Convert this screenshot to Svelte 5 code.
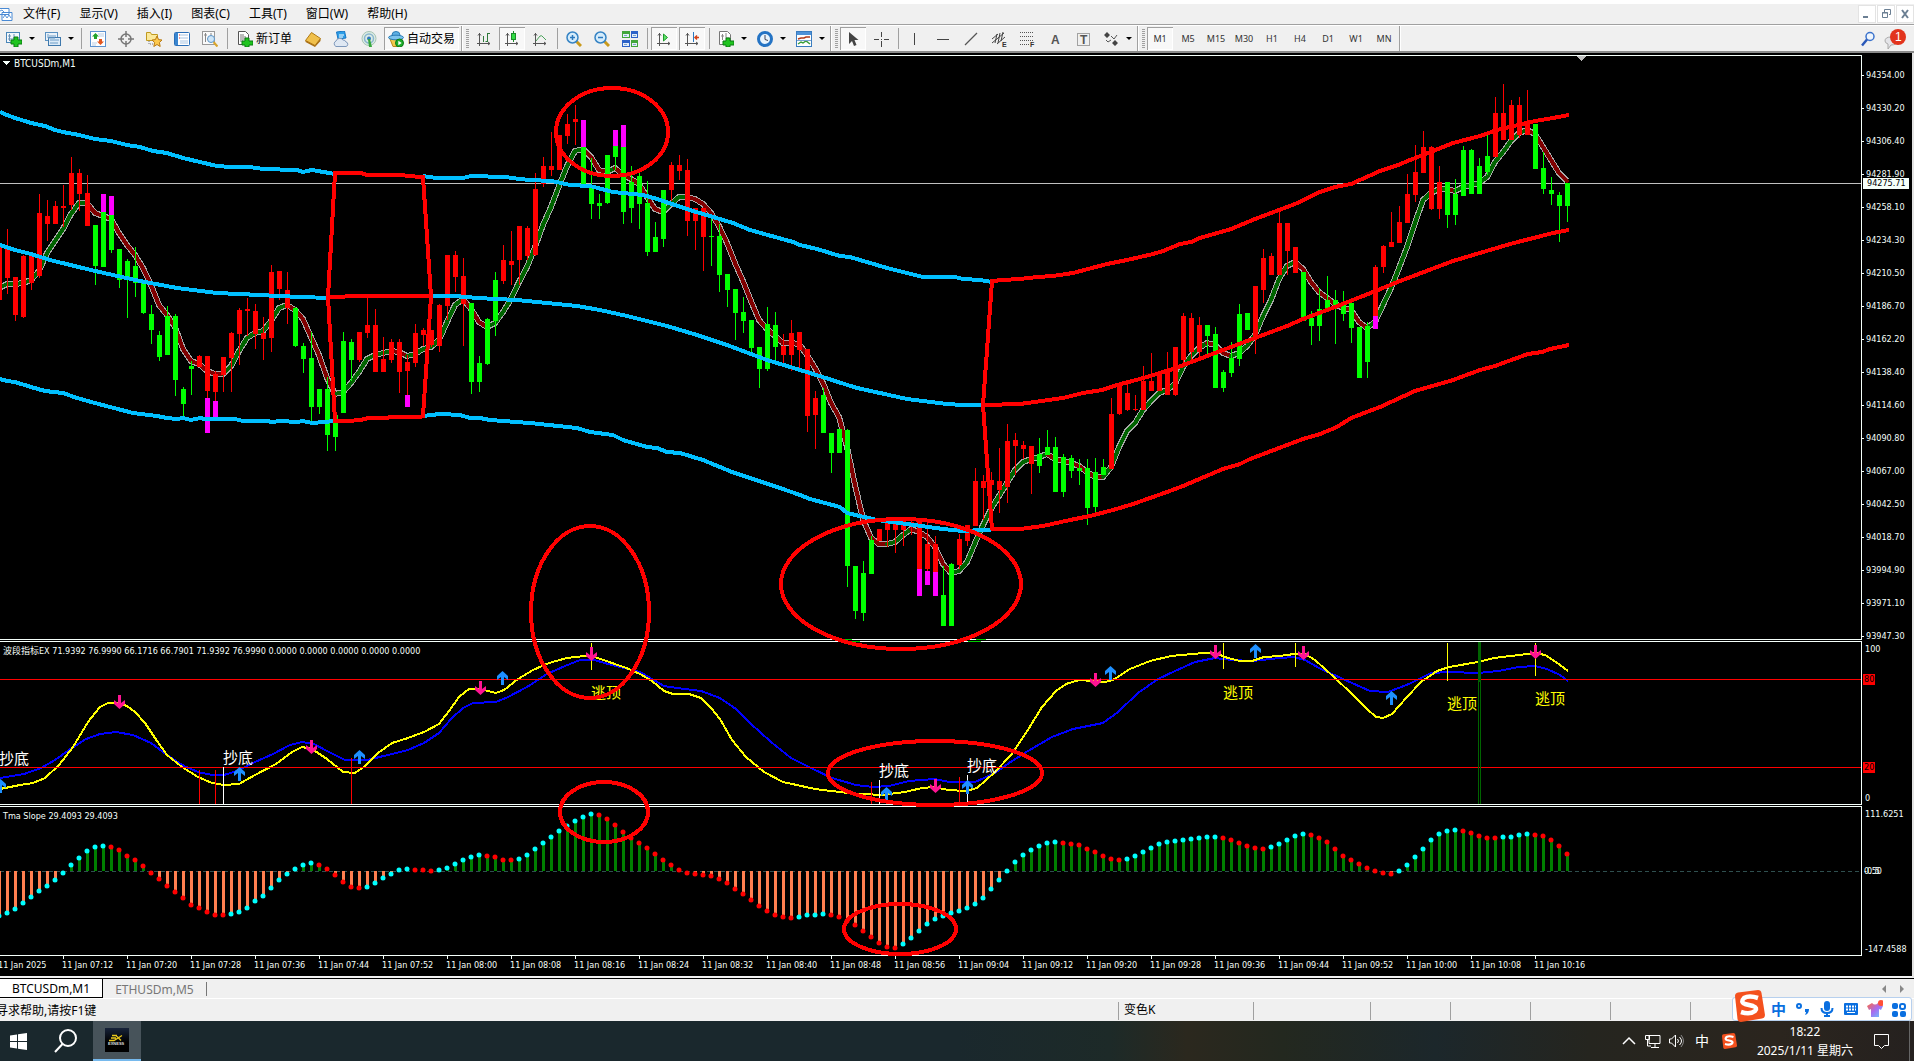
<script>
	const STEP = 8;

	const menus = ['文件(F)', '显示(V)', '插入(I)', '图表(C)', '工具(T)', '窗口(W)', '帮助(H)'];
	const periods = ['M1', 'M5', 'M15', 'M30', 'H1', 'H4', 'D1', 'W1', 'MN'];

	const prices = [
		'94354.00', '94330.20', '94306.40', '94281.90', '94258.10', '94234.30',
		'94210.50', '94186.70', '94162.20', '94138.40', '94114.60', '94090.80',
		'94067.00', '94042.50', '94018.70', '93994.90', '93971.10', '93947.30'
	];

	// one label every 8 minutes, 07:12 to 10:16
	const times = Array.from({ length: 24 }, (_, i) => {
		const m = 7 * 60 + 12 + i * 8;
		return `11 Jan ${String(Math.floor(m / 60)).padStart(2, '0')}:${String(m % 60).padStart(2, '0')}`;
	});

	// colour, body top, body bottom, wick top, wick bottom, signal top, signal bottom
	const candles = `
r,247,300,247,300 r,249,278,229,294 r,277,315,277,321 r,256,317,255,318 r,255,283,253,290
r,213,276,194,278 r,216,224,200,241 r,206,224,201,224 r,206,208,185,227 r,173,205,157,210
r,173,194,169,211 r,193,226,175,226 g,225,266,225,285 g,212,267,212,267,194,212 g,215,250,215,253,196,215
g,249,280,249,288 g,261,280,259,318 g,266,283,247,297 g,283,313,280,314 g,314,330,305,344
g,335,357,331,361 g,316,355,306,355 g,316,380,314,396 g,389,404,387,416 g,366,369,361,395
r,356,367,355,367 r,356,391,356,398,398,433 r,374,392,371,401,401,419 r,357,375,357,392 r,333,358,332,392
r,310,334,308,365 r,309,311,298,336 r,311,334,304,349 r,333,339,317,360 r,272,338,265,352
r,271,289,271,300 r,290,308,272,324 g,308,346,307,347 g,346,359,343,373 g,358,407,332,422
g,389,407,389,414 g,389,435,377,451 g,415,437,415,451 g,341,413,332,413 g,342,360,339,381
r,332,360,332,362 r,325,333,297,338 r,325,372,309,372 r,359,372,337,372 r,342,360,339,363
r,342,372,339,393 r,362,371,355,395,395,407 r,333,363,324,367 r,330,335,328,346 r,330,345,330,347
r,305,346,304,352 r,255,306,255,320 r,255,277,251,292 r,276,304,258,346 g,303,382,303,394
g,363,382,356,392 g,319,364,318,365 g,280,321,272,336 r,260,281,245,284 r,261,265,231,285
r,226,260,226,285 r,228,256,226,260 r,189,255,173,256 r,166,184,157,187 r,166,170,132,176
r,135,170,135,170 r,124,136,114,144 r,119,122,105,145 g,147,184,147,184,120,147 g,187,204,158,219
g,203,206,194,219 g,155,203,155,204 g,146,157,146,170,130,146 g,147,212,147,224,125,147 g,182,208,166,223
g,176,204,173,229 g,203,252,181,256 g,237,252,222,252 g,190,239,190,247 r,165,190,162,201
r,165,171,155,180 r,170,221,159,236 r,208,221,208,250 r,208,237,208,271 g,236,237,214,266
g,236,275,224,292 g,274,290,274,307 g,289,313,289,340 g,312,321,297,333 g,320,348,320,352
g,347,369,347,388 g,324,369,307,371 g,325,347,312,360 r,346,355,334,363 r,333,355,320,371
r,332,350,332,369 r,349,416,349,432 r,398,415,391,449 g,395,433,388,433 g,433,453,433,473
g,429,453,429,453 g,430,566,429,587 g,566,611,566,619 g,573,613,561,621 g,540,574,536,574
r,529,541,529,541 r,519,530,517,547 r,522,530,520,553 r,521,530,519,546 r,522,524,520,535
r,522,569,522,569,569,596 r,544,569,522,571,571,585 r,544,572,536,572,572,596 g,595,626,566,626 g,564,626,563,626
r,539,565,534,569 r,525,541,525,546 r,481,526,468,526 r,481,488,475,520 r,480,485,472,510
r,481,490,448,513 r,441,487,424,503 r,440,446,433,475 r,445,449,441,459 r,446,464,446,494
g,454,466,438,473 g,447,455,430,455 g,447,492,437,492 g,457,492,454,497 g,458,471,455,478
g,468,471,459,485 g,468,508,459,525 g,472,507,458,513 g,467,475,459,475 r,414,469,398,469
r,384,414,384,415 r,393,410,384,411 r,409,410,395,411 r,381,410,366,410 r,381,391,353,391
r,372,391,372,391 r,370,395,352,395 r,347,395,347,396 r,316,360,313,365 r,318,352,313,361
r,325,352,317,358 g,325,336,325,355 g,334,388,327,388 g,372,388,370,392 g,358,373,342,377
g,314,359,304,366 g,313,330,313,330 r,286,339,286,354 r,258,290,249,303 r,256,275,253,275
r,223,275,209,275 r,223,251,223,275 r,247,273,247,273 g,272,321,272,321 g,318,326,311,345
g,309,326,288,341 g,300,310,276,310 g,300,307,290,344 g,304,314,291,321 g,303,328,300,343
g,327,378,327,378 g,326,362,322,378 r,267,316,265,316,316,329 r,246,267,245,273 r,242,247,212,247
r,222,243,206,243 r,194,223,174,223 r,172,195,145,202 r,147,173,131,173 r,147,209,146,210
r,182,209,166,219 g,182,215,182,228 g,194,215,179,225 g,150,196,146,196 g,150,194,149,194
g,166,194,158,194 g,156,172,134,175 r,113,157,97,157 r,113,140,84,140 r,105,140,100,140
r,105,135,97,138 r,122,135,90,135 g,124,169,124,169 g,168,189,152,194 g,190,194,177,205
g,195,206,192,242 g,183,206,183,222`
		.trim()
		.split(/\s+/)
		.map((row, i) => {
			const [side, top, bottom, high, low, sigTop, sigBottom] = row.split(',');
			return { x: i * STEP - 1, side, top: +top, bottom: +bottom, high: +high, low: +low, sigTop: +sigTop, sigBottom: +sigBottom };
		});

	const average = [
		288, 284, 284, 283, 280, 271, 253, 241, 229, 214, 203, 203, 213, 216, 219, 233, 245, 255, 268, 285,
		305, 315, 327, 349, 361, 364, 371, 374, 374, 366, 351, 338, 333, 331, 321, 308, 305, 310, 319, 337,
		355, 378, 394, 392, 383, 372, 359, 355, 353, 351, 352, 356, 354, 349, 347, 340, 322, 305, 299, 309,
		322, 327, 323, 312, 299, 282, 267, 247, 225, 207, 186, 166, 151, 149, 157, 170, 172, 168, 175, 179,
		184, 197, 209, 212, 204, 197, 197, 199, 204, 213, 226, 243, 263, 281, 301, 320, 329, 336, 343, 343,
		344, 355, 368, 383, 403, 417, 447, 485, 519, 538, 544, 544, 542, 535, 529, 532, 537, 547, 564, 573,
		571, 562, 543, 525, 509, 496, 483, 470, 462, 459, 457, 454, 459, 461, 463, 466, 472, 477, 477, 467,
		447, 431, 423, 410, 401, 393, 390, 384, 367, 356, 348, 343, 345, 353, 356, 353, 346, 335, 316, 300,
		279, 266, 262, 269, 282, 292, 298, 304, 308, 310, 322, 328, 322, 305, 288, 268, 247, 223, 200, 193,
		189, 189, 191, 187, 185, 183, 177, 162, 152, 141, 133, 130, 134, 147, 160, 173, 181
	];

	const slope = [
		916, 913, 909, 903, 897, 891, 886, 880, 873, 865, 858, 851, 847, 846, 847, 850, 856, 860, 866, 873,
		879, 886, 892, 898, 905, 908, 912, 915, 915, 914, 912, 908, 901, 896, 888, 880, 874, 869, 865, 863,
		865, 869, 875, 882, 887, 888, 887, 883, 878, 874, 870, 869, 870, 870, 871, 870, 868, 864, 860, 857,
		855, 856, 857, 860, 860, 859, 855, 849, 843, 837, 831, 826, 821, 817, 814, 815, 819, 825, 832, 838,
		843, 848, 854, 860, 865, 870, 873, 874, 875, 876, 879, 883, 889, 894, 900, 906, 911, 915, 917, 918,
		917, 915, 915, 914, 915, 917, 921, 925, 931, 937, 943, 947, 948, 944, 938, 931, 924, 919, 916, 913,
		911, 908, 904, 898, 889, 880, 871, 862, 855, 850, 846, 843, 842, 843, 844, 845, 849, 852, 856, 859,
		860, 859, 856, 852, 848, 844, 842, 841, 840, 839, 838, 837, 837, 838, 840, 843, 846, 848, 849, 847,
		844, 840, 836, 834, 835, 838, 842, 849, 856, 860, 864, 868, 871, 873, 874, 871, 865, 857, 849, 840,
		834, 831, 830, 831, 833, 836, 838, 838, 837, 837, 835, 834, 835, 836, 840, 846, 854
	];

	// a falling value keeps its colour over flat steps
	function trend(values) {
		let falling = false;
		return values.map((y, i) => {
			if (i && y !== values[i - 1]) falling = y > values[i - 1];
			return { x: i * STEP - 1, y, falling };
		});
	}

	const ma = trend(average);
	const maLine = ma.map((p) => `${p.x},${p.y}`).join(' ');
	const dots = trend(slope);

	const bandsBlue = [
		'0,112 7,115 15,118 31,123 45,126 55,130 63,132 79,135 95,139 111,141 127,145 140,147 153,151 167,153 183,158 200,162 217,166 230,167 250,167 263,169 297,170 303,172 312,170 335,174',
		'423,176 436,178 463,178 471,176 505,177 520,179 530,180 552,181 570,185 590,186 613,192 643,195 657,199 693,211 733,223 750,230 793,242 800,245 817,249 840,256 850,257 887,268 923,277 955,277 963,279 980,280 992,282',
		'0,245 15,250 31,254 50,260 95,271 140,281 177,288 217,293 260,295 277,296 328,298',
		'431,296 455,296 477,298 517,300 547,303 577,306 600,310 627,316 667,326 697,335 727,345 767,360 810,373 857,388 880,393 907,399 947,404 963,405 984,405',
		'0,379 7,381 15,382 31,387 45,391 63,393 77,398 95,403 110,407 133,413 157,416 167,418 177,419 183,418 191,420 200,418 205,419 235,419 243,421 267,421 272,422 280,421 297,422 303,421 312,423 335,421',
		'424,416 430,415 441,414 460,415 470,418 480,418 490,420 530,423 577,428 590,432 613,435 623,440 647,447 657,448 667,452 680,453 703,460 732,472 765,483 780,488 800,495 810,499 840,507 847,513 877,520 907,524 943,529 963,531 983,530 991,530'
	];
	const bandsRed = [
		'328,297 335,173 361,173 367,175 403,175 407,176 423,177 431,296 363,296 328,297 335,421 347,421 361,420 368,418 385,418 392,417 420,417 423,416 431,297',
		'992,530 983,405 992,281 1003,280 1020,279 1037,277 1053,276 1073,273 1107,264 1127,260 1153,254 1163,251 1180,244 1191,242 1200,238 1231,229 1255,219 1295,204 1320,192 1335,187 1351,184 1380,171 1398,165 1410,160 1423,155 1453,143 1480,136 1497,130 1535,121 1553,118 1569,115',
		'985,405 1020,404 1063,398 1083,393 1102,390 1117,385 1140,379 1173,369 1215,353 1255,338 1287,326 1303,319 1335,307 1373,292 1400,281 1453,261 1510,244 1553,233 1569,230',
		'991,529 1020,529 1043,526 1070,520 1090,516 1113,510 1133,504 1167,492 1183,486 1197,480 1223,469 1240,464 1250,459 1303,439 1320,434 1337,427 1351,418 1380,407 1415,391 1453,380 1480,370 1495,366 1503,363 1528,354 1542,352 1550,349 1569,345'
	];

	const fast =
		'0,789 20,785 33,783 45,778 59,765 73,747 88,722 100,707 108,703 118,703 127,706 135,712 145,723 157,741 167,755 182,767 198,777 212,783 224,785 239,784 255,775 276,764 292,752 302,747 312,749 327,759 343,772 355,773 365,766 378,753 392,743 408,738 424,732 439,724 449,711 459,697 469,689 480,689 496,693 504,690 518,679 533,670 549,663 567,658 584,656 592,656 612,663 629,669 640,674 652,681 664,691 673,694 689,694 701,698 711,708 720,719 732,740 746,757 764,772 783,782 815,789 848,793 881,795 905,792 922,788 934,787 948,790 966,791 977,788 995,772 1011,755 1026,733 1042,707 1056,691 1066,684 1079,680 1105,682 1113,680 1130,669 1150,661 1171,656 1203,653 1215,653 1228,658 1240,661 1252,661 1264,657 1280,656 1294,654 1305,654 1315,660 1335,678 1352,694 1366,708 1376,717 1383,718 1392,714 1407,697 1421,682 1437,671 1449,667 1478,662 1494,658 1519,655 1535,653 1545,655 1556,662 1568,671';
	const slow =
		'0,778 24,774 41,768 55,760 69,750 86,739 100,734 116,732 133,735 151,743 167,755 184,766 198,772 212,775 224,775 237,771 255,762 273,754 290,745 302,742 314,744 327,751 345,760 367,760 392,754 408,750 424,743 439,733 451,719 463,708 473,703 496,702 508,697 527,687 547,674 565,666 580,660 594,660 612,665 640,672 664,686 677,688 701,691 720,698 736,709 750,723 771,742 791,758 811,768 832,778 856,785 873,787 889,786 909,781 934,779 950,782 975,782 995,773 1009,763 1028,751 1052,737 1073,729 1103,723 1118,712 1138,693 1158,679 1175,671 1195,662 1215,658 1232,660 1252,661 1280,658 1294,657 1305,660 1319,668 1343,679 1370,691 1388,692 1409,684 1431,673 1449,672 1478,673 1498,671 1519,667 1535,666 1547,669 1560,675 1568,681';

	const downArrows = [[119, 702], [311, 747], [480, 688], [591, 654], [935, 786], [1095, 680], [1215, 652], [1303, 653], [1535, 652]];
	const upArrows = [[0, 786], [239, 774], [359, 757], [502, 678], [886, 794], [967, 787], [1110, 673], [1255, 651], [1391, 698]];

	// x, top, bottom, colour
	const marks = [
		[199, 770, 804, 'red'], [215, 770, 804, 'red'], [351, 758, 804, 'red'], [871, 782, 804, 'red'], [959, 777, 804, 'red'],
		[223, 767, 804, 'white'], [879, 780, 804, 'white'], [967, 775, 804, 'white'],
		[591, 643, 670, 'yellow'], [1223, 643, 669, 'yellow'], [1295, 643, 667, 'yellow'], [1447, 643, 681, 'yellow'], [1535, 643, 676, 'yellow']
	];
	const bottoms = [[-1, 764], [223, 763], [879, 776], [967, 771]];
	const tops = [[591, 698], [1223, 698], [1447, 709], [1535, 704]];

	// cx, cy, rx, ry
	const rings = [[612, 132, 56, 44], [901, 584, 120, 65], [590, 612, 59, 86], [604, 812, 44, 30], [935, 773, 107, 32], [900, 929, 56, 25]];
</script>

{#snippet icon(name)}
	<svg class="icon" width="16" height="16" viewBox="0 0 16 16" aria-hidden="true">
		{#if name === 'newchart'}
			<rect x="0.5" y="1.5" width="13" height="10" fill="#f4f8fc" stroke="#4a86b8" />
			<path d="M3.5 3v7M2 5h3M8 3v5M2 8h9" stroke="#6a93b8" fill="none" />
			<path d="M8 6h4v3h4v4h-4v3H8v-3H5V9h3z" fill="#1fc41f" stroke="#0b7a12" />
		{:else if name === 'profiles'}
			<rect x="0.5" y="1.5" width="12" height="8" fill="#eaf2fa" stroke="#5a90c0" />
			<rect x="3.5" y="6.5" width="12" height="8" fill="#dcebf8" stroke="#3f78ac" />
			<path d="M3 3v4h7M4 5h7M5 9h9M5 12h8" stroke="#6d9cc6" fill="none" />
		{:else if name === 'market'}
			<rect x="0.5" y="0.5" width="15" height="15" fill="#fff" stroke="#5d93d0" />
			<path d="M8 3h6M9 5h5M2 12h5M2 14h4" stroke="#b9cde4" />
			<path d="M5.500 2l3.500 3.500H7V8H4V5.500H2z" fill="#23a32b" />
			<path d="M10.500 14L7 10.500h2V8h3v2.500h2z" fill="#e2551f" />
		{:else if name === 'target'}
			<circle cx="8" cy="8" r="5" fill="none" stroke="#777" stroke-width="1.500" />
			<path d="M8 0v6M8 10v6M0 8h6M10 8h6" stroke="#777" stroke-width="1.500" />
		{:else if name === 'navigator'}
			<path d="M0.500 1.500h4l1 2h6v6h-11z" fill="#fbe99a" stroke="#c09a20" />
			<path d="M3 10v3h4" stroke="#777" stroke-dasharray="1 1" fill="none" />
			<path d="M11 5l1.600 3.600 3.400.4-2.600 2.500.8 4L11 13.500 7.800 15.500l.8-4L6 9l3.400-.4z" fill="#fdc94e" stroke="#b87a12" />
		{:else if name === 'terminal'}
			<rect x="0.5" y="1.5" width="15" height="13" rx="1" fill="#fff" stroke="#2a6fb8" />
			<rect x="1" y="2" width="3" height="12" fill="#3a86d0" />
			<path d="M6 4h8M6 7h8M6 10h8M6 12h8" stroke="#a7c4e2" />
			<path d="M5 4h1M5 7h1" stroke="#d33" />
		{:else if name === 'tester'}
			<rect x="0.5" y="0.5" width="12" height="13" fill="#fafafa" stroke="#999" />
			<path d="M3.500 2v9M2 4h3M9 2v4" stroke="#888" fill="none" />
			<path d="M11.500 11l4 4.500" stroke="#d9a52c" stroke-width="2.200" />
			<circle cx="9" cy="8" r="3.500" fill="#cfe6f8" stroke="#5c96c8" />
		{:else if name === 'order'}
			<path d="M1.500 0.500h7l3 3v10h-10z" fill="#fff" stroke="#555" />
			<path d="M3 4h4M3 6h6M3 8h5M3 10h3" stroke="#777" />
			<path d="M8 7h4v3h4v4h-4v2H8v-2H5v-4h3z" fill="#1fc41f" stroke="#0b7a12" />
		{:else if name === 'book'}
			<path d="M0.500 9.500l6-8 9 6-5.500 7z" fill="#f0c04c" stroke="#b07a14" />
			<path d="M0.500 9.500l9.500 5 5.500-7v2.500l-5.500 6-9.500-5z" fill="#a96e12" />
		{:else if name === 'cloud'}
			<path d="M3.500 1l8-1 1.500 7-8 1z" fill="#2d9fe8" stroke="#1976c4" />
			<path d="M6 4h5M6 6h4" stroke="#fff" />
			<path d="M3 15.500a3 3 0 0 1 0-5.500 4 4 0 0 1 7-1 3 3 0 0 1 3 2 2.300 2.300 0 0 1 0 4.500z" fill="#dfe8f3" stroke="#7e98bb" />
		{:else if name === 'signal'}
			<circle cx="8" cy="7.5" r="7" fill="#dcebe4" stroke="#a5c4b4" />
			<circle cx="8" cy="7.5" r="4.500" fill="none" stroke="#8ab6cf" stroke-width="1.500" />
			<circle cx="8" cy="7.500" r="2" fill="#2f79c0" />
			<path d="M7 8h2l2 8H8z" fill="#35a83c" />
		{:else if name === 'robot'}
			<path d="M2 8l3 7.500h6l3-7.500z" fill="#f3c84b" stroke="#b78a1e" />
			<ellipse cx="8" cy="4" rx="4" ry="3.500" fill="#5db0e4" stroke="#2b7ab4" />
			<ellipse cx="8" cy="6.500" rx="7.500" ry="2.300" fill="#7cc3ee" stroke="#2b7ab4" />
			<circle cx="11.500" cy="12" r="4" fill="#1fae2a" stroke="#0d7a18" />
			<path d="M10.300 9.800l3.400 2.200-3.400 2.200z" fill="#fff" />
		{:else if name === 'bars'}
			<path d="M3.500 2v13M1 12.500h13M2 4.500l1.500-2L5 4.500M12 11l2 1.500-2 1.500" stroke="#555" fill="none" />
			<path d="M7.500 5v6M11.500 2v9M11 2.500h3M9.500 10.500H11" stroke="#2f7a3b" fill="none" />
		{:else if name === 'candle'}
			<path d="M3.500 2v13M1 12.500h13M2 4.500l1.500-2L5 4.500M12 11l2 1.500-2 1.500" stroke="#555" fill="none" />
			<path d="M9.500 0v11" stroke="#1e8c2c" />
			<rect x="7.500" y="2.500" width="4" height="6" fill="#31dd44" stroke="#1e8c2c" />
		{:else if name === 'line'}
			<path d="M3.500 2v13M1 12.500h13M2 4.500l1.500-2L5 4.500M12 11l2 1.500-2 1.500" stroke="#555" fill="none" />
			<path d="M4 10l4-5q2-1 3 1l3 3" stroke="#4ba35a" fill="none" />
		{:else if name === 'zoomin' || name === 'zoomout'}
			<path d="M10 10l5 5" stroke="#c99a1c" stroke-width="3" />
			<circle cx="6.500" cy="6.500" r="5.500" fill="#d5ecfb" stroke="#3583c4" stroke-width="1.500" />
			<path d="M4 6.500h5" stroke="#2b78bd" stroke-width="1.500" />
			{#if name === 'zoomin'}<path d="M6.500 4v5" stroke="#2b78bd" stroke-width="1.500" />{/if}
		{:else if name === 'tile'}
			<rect x="0" y="0" width="8" height="7" fill="#41a63b" /><rect x="9" y="0" width="7" height="7" fill="#2c62c8" />
			<rect x="0" y="9" width="8" height="7" fill="#2c62c8" /><rect x="9" y="9" width="7" height="7" fill="#41a63b" />
			<path d="M1 3h6v3H1zM10 3h5v3h-5zM1 12h6v3H1zM10 12h5v3h-5z" fill="#e4eefa" />
			<path d="M2 4.500h3M11 4.500h3M2 13.500h3M11 13.500h3" stroke="#7fa6c8" />
		{:else if name === 'scroll'}
			<path d="M3.500 2v13M1 12.500h13M2 4.500l1.500-2L5 4.500M12 11l2 1.500-2 1.500" stroke="#555" fill="none" />
			<path d="M7.500 3v7l4-3.500z" fill="#5fe068" stroke="#1e9c2c" />
		{:else if name === 'shift'}
			<path d="M3.500 2v13M1 12.500h13M2 4.500l1.500-2L5 4.500M12 11l2 1.500-2 1.500" stroke="#555" fill="none" />
			<path d="M9.500 1v10" stroke="#2c78c0" />
			<path d="M10.500 6.500H15M13 4.500l-2 2 2 2" stroke="#d3431a" fill="none" stroke-width="1.500" />
		{:else if name === 'template'}
			<path d="M1.500 0.500h8l3 3v10h-11z" fill="#fff" stroke="#777" />
			<path d="M4.500 3v6M3 5h3M8 2v5h3" stroke="#888" fill="none" />
			<path d="M8 7h4v3h4v4h-4v2H8v-2H5v-4h3z" fill="#1fc41f" stroke="#0b7a12" />
		{:else if name === 'clock'}
			<circle cx="8" cy="8" r="6.500" fill="#e9f4fd" stroke="#2473c4" stroke-width="3" />
			<path d="M8 4v4.500l3 1" stroke="#445" fill="none" />
		{:else if name === 'indicators'}
			<rect x="0.500" y="0.500" width="15" height="15" fill="#fff" stroke="#3a7cc0" />
			<rect x="1" y="1" width="14" height="3" fill="#4e92d8" />
			<path d="M2 8l3-1 3 0 2-1 4 0" stroke="#b23a1a" fill="none" stroke-width="1.500" />
			<path d="M2 13l3-2 2 1 3-2 4 3" stroke="#3a9c3a" fill="none" stroke-width="1.500" />
			<path d="M1 9.500h14" stroke="#7aa4d0" />
		{:else if name === 'cursor'}
			<path d="M4 1v12l3-3 2 5 2.500-1-2-5h4z" fill="#444" />
		{:else if name === 'cross'}
			<path d="M8.500 1v5M8.500 10v6M1 8.500h5M11 8.500h5M8 8.500h1" stroke="#444" fill="none" />
		{:else if name === 'vline'}
			<path d="M7.500 2v12" stroke="#444" />
		{:else if name === 'hline'}
			<path d="M2 8.500h12" stroke="#444" />
		{:else if name === 'trend'}
			<path d="M2 14L14 2" stroke="#555" stroke-width="1.300" />
		{:else if name === 'channel'}
			<path d="M1 12L13 2M1 8l6-5M6 13l8-7M4 12l2-9M7 12l2-10M10 10l2-9" stroke="#444" fill="none" />
			<text x="11" y="16" class="tiny">E</text>
		{:else if name === 'fibo'}
			<path d="M1 1.500h14M1 5.500h14M1 9.500h14M1 13.500h9" stroke="#555" stroke-dasharray="1 1" />
			<text x="11" y="16" class="tiny">F</text>
		{:else if name === 'text'}
			<text x="4" y="13" class="glyph">A</text>
		{:else if name === 'label'}
			<rect x="2.500" y="2.500" width="12" height="12" fill="none" stroke="#555" stroke-dasharray="1 1" />
			<text x="5" y="13" class="glyph">T</text>
		{:else if name === 'shapes'}
			<path d="M4 1l3 3-3 3-3-3zM12 9l3 3-3 3-3-3z" fill="#444" />
			<path d="M3 9l2 2 3-2M8 5l3 3 3-4" stroke="#555" fill="none" />
		{:else if name === 'find'}
			<circle cx="10" cy="5.500" r="4" fill="#eef5fd" stroke="#3a72cc" stroke-width="1.500" />
			<path d="M7 8.500l-5 6" stroke="#2a58b8" stroke-width="2.500" />
		{/if}
	</svg>
{/snippet}

{#snippet tool(name, label, pressed)}
	<button class="tool" class:pressed aria-label={label}>{@render icon(name)}</button>
{/snippet}

{#snippet drop(name, label)}
	<button class="drop" aria-label={label}>{@render icon(name)}<i class="caret"></i></button>
{/snippet}

{#snippet sogou(size)}
	<svg width={size} height={size} viewBox="0 0 32 32" aria-hidden="true">
		<path d="M2 6q0-3 3-3.500L25 0q3 0 3.500 3L32 25q0 3-3 3.500L8 32q-3 0-3.500-3z" fill="#f4511e" />
		<path d="M25 8q-9-3-14 0-4 4 1 6l8 2q5 2 2 5-5 4-14 1" fill="none" stroke="#fff" stroke-width="4.500" />
	</svg>
{/snippet}

<div class="app">
	<div class="titlestrip"></div>
	<nav class="menubar">
		<svg class="appicon" width="13" height="16" viewBox="0 0 13 16" aria-hidden="true">
			<path d="M0 2.500h9v6H0M2 6.500h10v8H2z" fill="#fff" stroke="#4a8ad4" />
			<path d="M3 12l2-3 2 3 2-3 2 3M0 5l2-1 2 2" fill="none" stroke="#5a94d8" />
		</svg>
		{#each menus as menu}
			<button class="menu">{menu}</button>
		{/each}
		<div class="winbtns">
			<button aria-label="最小化"><svg width="16" height="16"><path d="M4 11h5" stroke="#6b7f93" stroke-width="2" /></svg></button>
			<button aria-label="还原"><svg width="16" height="16"><path d="M6.500 6V3.500h6v5H11M4 7h6M4.500 6.500h5v5h-5z" fill="none" stroke="#6b7f93" /></svg></button>
			<button aria-label="关闭"><svg width="16" height="16"><path d="M5 4l6 8M11 4l-6 8" stroke="#6b7f93" stroke-width="2" /></svg></button>
		</div>
	</nav>

	<div class="toolbar">
		<div class="group">
			{@render drop('newchart', '新图表')}
			{@render drop('profiles', '图表模板')}
			<i class="sep"></i>
			{@render tool('market', '市场报价')}
			{@render tool('target', '数据窗口')}
			{@render tool('navigator', '导航')}
			{@render tool('terminal', '终端')}
			{@render tool('tester', '策略测试')}
			<i class="sep"></i>
			<button class="wide">{@render icon('order')}新订单</button>
			{@render tool('book', 'MetaEditor')}
			{@render tool('cloud', '云')}
			{@render tool('signal', '信号')}
			<button class="wide auto pressed">{@render icon('robot')}自动交易</button>
		</div>
		<div class="group gripped">
			{@render tool('bars', '柱状图')}
			{@render tool('candle', '蜡烛图', true)}
			{@render tool('line', '折线图')}
			<i class="sep"></i>
			{@render tool('zoomin', '放大')}
			{@render tool('zoomout', '缩小')}
			{@render tool('tile', '平铺窗口')}
			<i class="sep"></i>
			{@render tool('scroll', '自动滚动', true)}
			{@render tool('shift', '图表平移', true)}
			<i class="sep"></i>
			{@render drop('template', '指标')}
			{@render drop('clock', '周期')}
			{@render drop('indicators', '模板')}
		</div>
		<div class="group gripped">
			{@render tool('cursor', '光标', true)}
			{@render tool('cross', '十字准线')}
			<i class="sep"></i>
			{@render tool('vline', '垂直线')}
			{@render tool('hline', '水平线')}
			{@render tool('trend', '趋势线')}
			{@render tool('channel', '等距通道')}
			{@render tool('fibo', '斐波那契')}
			{@render tool('text', '文字')}
			{@render tool('label', '文字标签')}
			{@render drop('shapes', '箭头')}
		</div>
		<div class="group gripped">
			{#each periods as period, i}
				<button class="tool period" class:pressed={i === 0}>{period}</button>
			{/each}
		</div>
		<div class="right">
			<button class="tool" aria-label="搜索">{@render icon('find')}</button>
			<button class="chat" aria-label="消息">
				<svg width="24" height="22" viewBox="0 0 24 22">
					<path d="M2 13q0-4 6-4t6 4-6 4l-3 4v-5q-3-1-3-3z" fill="#e4e4e8" stroke="#aaa" />
					<circle cx="15" cy="9" r="8" fill="#e2341d" />
					<text x="12" y="13">1</text>
				</svg>
			</button>
		</div>
	</div>

	<main class="chart">
		<section class="pane price">
			<svg class="plot">
				<g transform="translate(0,-56)">
					<path d="M0 183.500h3000" stroke="#c0c0c0" />
					<polyline points={maLine} fill="none" stroke="#a9a9a9" stroke-width="6" />
					{#each ma as p, i}
						{#if i}
							<line x1={ma[i - 1].x} y1={ma[i - 1].y} x2={p.x} y2={p.y} stroke={p.falling ? '#800000' : '#006400'} stroke-width="4" stroke-linecap="round" />
						{/if}
					{/each}
					{#each candles as c}
						<g class={c.side}>
							<rect x={c.x} y={c.high} width="1" height={c.low - c.high} />
							<rect x={c.x - 2} y={c.top} width="5" height={Math.max(1, c.bottom - c.top)} />
						</g>
						{#if c.sigTop}
							<rect x={c.x - 2} y={c.sigTop} width="5" height={c.sigBottom - c.sigTop} fill="#f0f" />
						{/if}
					{/each}
					{#each bandsBlue as points}
						<polyline class="band" {points} stroke="#00bfff" />
					{/each}
					{#each bandsRed as points}
						<polyline class="band" {points} stroke="#f00" />
					{/each}
					<path d="M3 61h7l-3.500 4z" fill="#f5fffa" />
					<path d="M1576 56h10l-5 5z" fill="#c0c0c0" />
					<text class="symbol" x="14" y="67">BTCUSDm,M1</text>
				</g>
			</svg>
			<ol class="axis">
				{#each prices as price}
					<li>{price}</li>
				{/each}
				<li class="current">94275.71</li>
			</ol>
		</section>

		<section class="pane wave">
			<svg class="plot">
				<g transform="translate(0,-642)">
					<polyline points={slow} fill="none" stroke="#00f" stroke-width="2" />
					<polyline points={fast} fill="none" stroke="#ff0" stroke-width="2" />
					<path d="M0 679.500h3000M0 767.500h3000" stroke="#f00" />
					{#each marks as [x, top, bottom, color]}
						<rect {x} y={top} width="1" height={bottom - top} fill={color} />
					{/each}
					<path d="M1478.500 642v162M1480.500 642v162" stroke="#006400" />
					<rect x="1478" y="642" width="3" height="40" fill="#006400" />
					{#each downArrows as [x, y]}
						<path class="arrow" d="M-1 -7h3v8l4-3v4l-5.500 5-5.500-5v-4l4 3z" transform="translate({x},{y})" fill="#ff1493" />
					{/each}
					{#each upArrows as [x, y]}
						<path class="arrow" d="M-1 7h3v-8l4 3v-4l-5.500-5-5.500 5v4l4-3z" transform="translate({x},{y})" fill="#1e90ff" />
					{/each}
					{#each bottoms as [x, y]}
						<text class="sign" {x} {y}>抄底</text>
					{/each}
					{#each tops as [x, y]}
						<text class="sign escape" {x} {y}>逃顶</text>
					{/each}
					<text x="3" y="654">波段指标EX 71.9392 76.9990 66.1716 66.7901 71.9392 76.9990 0.0000 0.0000 0.0000 0.0000 0.0000</text>
				</g>
			</svg>
			<div class="axis ends">
				<span>100</span>
				<span>0</span>
				<b class="level high">80</b>
				<b class="level low">20</b>
			</div>
		</section>

		<section class="pane tma">
			<svg class="plot">
				<g transform="translate(0,-807)">
					<path d="M0 871.500h3000" stroke="#2f4f4f" stroke-dasharray="4 3" />
					{#each dots as d}
						<rect x={d.x - 1} y={Math.min(d.y, 871)} width="3" height={Math.abs(871 - d.y)} fill={d.y > 871 ? '#ff7f50' : '#008000'} />
						<circle class="dot" cx={d.x} cy={d.y} r="2.500" fill={d.falling ? '#f00' : '#0ff'} />
					{/each}
					<text x="3" y="819">Tma Slope 29.4093 29.4093</text>
				</g>
			</svg>
			<div class="axis ends">
				<span>111.6251</span>
				<span>-147.4588</span>
				<span class="zero">0.50</span>
				<span class="zero">-0.5</span>
			</div>
		</section>

		<ol class="timeline">
			<li>11 Jan 2025</li>
			{#each times as time}
				<li>{time}</li>
			{/each}
		</ol>

		<svg class="drawings" aria-hidden="true">
			<g transform="translate(0,-53)" fill="none" stroke="#f00" stroke-width="4">
				<path d="M843 639.500h9M850 641.500h10M976 639.500h10M968 641.500h13" stroke="#0c0" stroke-width="1" />
				{#each rings as [cx, cy, rx, ry]}
					<ellipse {cx} {cy} {rx} {ry} />
				{/each}
			</g>
		</svg>
	</main>

	<div class="tabs">
		<button class="tab active">BTCUSDm,M1</button>
		<button class="tab">ETHUSDm,M5</button>
		<div class="pager">
			<button aria-label="向左"><svg width="6" height="8"><path d="M5 0v8L1 4z" fill="#888" /></svg></button>
			<button aria-label="向右"><svg width="6" height="8"><path d="M1 0v8l4-4z" fill="#888" /></svg></button>
		</div>
	</div>

	<footer class="status">
		<span class="help">寻求帮助,请按F1键</span>
		<span class="cell c1">变色K</span>
		<span class="cell c2"></span>
		<span class="cell c3"></span>
		<span class="cell c3"></span>
		<span class="cell c3"></span>
		<span class="cell c3"></span>
		<span class="cell c4"></span>
		<div class="ime">
			<span class="imelogo">{@render sogou(32)}</span>
			<b>中</b>
			<svg width="16" height="16"><circle cx="4" cy="5" r="2" fill="none" stroke="#0a6fe0" stroke-width="2" /><path d="M10 8h4q0 5-4 6 1-2 1-3h-1z" fill="#0a6fe0" /></svg>
			<svg width="16" height="16"><rect x="5" y="0" width="6" height="10" rx="3" fill="#0a6fe0" /><path d="M2.500 7q0 5 5.500 5t5.500-5M8 12v2M5 15h6" fill="none" stroke="#0a6fe0" stroke-width="2" /></svg>
			<svg width="16" height="16"><rect x="1" y="2" width="14" height="12" rx="1" fill="#0a6fe0" /><path d="M3 5.500h10M3 8.500h10" stroke="#fff" stroke-width="2" stroke-dasharray="2 1" /><path d="M4 11.500h8" stroke="#fff" /></svg>
			<svg width="16" height="18">
				<defs><linearGradient id="shirt" x1="0" y1="0" x2="1" y2="1"><stop offset="0" stop-color="#ff6a3d" /><stop offset="0.500" stop-color="#a86bf0" /><stop offset="1" stop-color="#5fd0ff" /></linearGradient></defs>
				<path d="M0 6l5-3q3 3 6 0l5 3-2 4-2-1v8H4V9L2 10z" fill="url(#shirt)" /><circle cx="14" cy="3" r="3" fill="#ff4f38" />
			</svg>
			<svg width="16" height="16"><rect x="1" y="2" width="6" height="6" rx="2" fill="#0a6fe0" /><rect x="9" y="3" width="5" height="5" rx="2" fill="none" stroke="#0a6fe0" stroke-width="2" /><rect x="1" y="10" width="6" height="6" rx="2" fill="#0a6fe0" /><rect x="9" y="10" width="6" height="6" rx="2" fill="#0a6fe0" /></svg>
		</div>
	</footer>

	<div class="taskbar">
		<button class="task" aria-label="开始">
			<svg width="17" height="17"><path d="M0 2.500l7-1v6.500H0zM8 1.300L17 0v8H8zM0 9h7v6.500l-7-1zM8 9h9v8l-9-1.300z" fill="#fff" /></svg>
		</button>
		<button class="task find" aria-label="搜索">
			<svg width="24" height="24"><circle cx="14" cy="9" r="8" fill="none" stroke="#fff" stroke-width="2" /><path d="M8.500 15L1 23" stroke="#fff" stroke-width="2" /></svg>
		</button>
		<button class="task running" aria-label="Exness">
			<svg width="24" height="24">
				<defs><linearGradient id="exness" x1="0" y1="0" x2="0" y2="1"><stop offset="0" stop-color="#17233a" /><stop offset="0.600" stop-color="#000" /></linearGradient></defs>
				<rect width="24" height="24" fill="url(#exness)" />
				<path d="M7 7.500h5M6 10h5M4 12.500h5l8-5M11 7.500l5 5" stroke="#e8c61c" stroke-width="1.300" fill="none" />
				<text x="3" y="17">EXNESS</text>
			</svg>
		</button>
		<div class="tray">
			<svg width="14" height="10"><path d="M1 8l6-6 6 6" fill="none" stroke="#fff" stroke-width="1.500" /></svg>
			<svg width="17" height="15"><path d="M5 1.500h11v8H5zM11 10v3M7 13.500h8M1.500 1.500h4v4h-4zM3.500 6v6H7" fill="none" stroke="#fff" /></svg>
			<svg width="16" height="14"><path d="M0.500 5h2l4-4v12l-4-4h-2z" fill="none" stroke="#fff" /><path d="M8.500 5q2 2 0 4M10.500 3q4 4 0 8" fill="none" stroke="#fff" /><path d="M12 1q5 6 0 12" fill="none" stroke="#888" /></svg>
			<span class="lang">中</span>
			<span class="logo">{@render sogou(16)}</span>
			<div class="clock"><span>18:22</span><span>2025/1/11 星期六</span></div>
			<svg width="18" height="17"><path d="M1.500 1.500h14v11h-4l-3 3-3-3h-4z" fill="none" stroke="#fff" /></svg>
			<i class="peek"></i>
		</div>
	</div>
</div>

<style>
	:global(body) {
		background: #f0f0f0;
	}
	.app {
		display: flex;
		flex-direction: column;
		overflow: hidden;
		font: 12px/16px 'Noto Sans', 'Noto Sans CJK SC', sans-serif;
		color: #000;
	}
	button {
		font: inherit;
		color: inherit;
		background: none;
		border: 0;
		padding: 0;
		margin: 0;
	}
	svg {
		display: block;
		flex: none;
	}
	ol {
		list-style: none;
		margin: 0;
		padding: 0;
	}

	.titlestrip {
		height: 4px;
		background: #fff;
	}
	.menubar {
		display: flex;
		align-items: center;
		height: 20px;
		background: #f0f0f0;
		border-bottom: 1px solid #a0a0a0;
	}
	.menu {
		padding: 0 9px 0 10px;
		white-space: nowrap;
	}
	.winbtns {
		display: flex;
		gap: 1px;
		margin-left: auto;
		background: #fff;
	}
	.winbtns button {
		border: 1px solid #e3e3e3;
		background: #fff;
	}

	.toolbar {
		display: flex;
		height: 25px;
		background: #f0f0f0;
		border-top: 1px solid #fff;
		border-bottom: 2px solid #8a8a8a;
	}
	.group {
		display: flex;
		align-items: center;
		padding-left: 1px;
		border-right: 1px solid #a0a0a0;
		box-shadow: 1px 0 #fff;
	}
	.gripped {
		padding-left: 0;
	}
	.gripped::before {
		content: '';
		width: 3px;
		height: 19px;
		margin: 0 2px 0 4px;
		background: repeating-linear-gradient(#a0a0a0 0 1px, #f0f0f0 1px 2px);
	}
	.tool,
	.drop,
	.wide {
		display: flex;
		align-items: center;
		height: 23px;
		margin-right: 2px;
		box-sizing: border-box;
		white-space: nowrap;
	}
	.tool {
		justify-content: center;
		width: 26px;
	}
	.drop {
		width: 37px;
		gap: 7px;
		padding-left: 5px;
	}
	.wide {
		gap: 3px;
		padding: 0 6px;
	}
	.auto {
		padding: 0 4px;
	}
	.pressed {
		background: #f8f8f8;
		box-shadow: inset 1px 1px #a0a0a0, inset -1px -1px #fff;
	}
	.period {
		font-size: 9px;
		color: #333;
	}
	.caret {
		border: 3px solid transparent;
		border-top-color: #000;
		border-bottom: 0;
	}
	.sep {
		width: 1px;
		height: 21px;
		margin: 0 3px 0 2px;
		background: #a0a0a0;
	}
	.tiny {
		font: bold 7px 'Liberation Sans', sans-serif;
		fill: #333;
	}
	.glyph {
		font: bold 12px 'Liberation Sans', sans-serif;
		fill: #555;
	}
	.right {
		display: flex;
		align-items: center;
		margin-left: auto;
		padding-right: 7px;
	}
	.chat text {
		font: 12px 'Liberation Sans', sans-serif;
		fill: #fff;
	}

	.chart {
		position: relative;
		padding-top: 2px;
		background: #000;
		border-right: 2px solid #e3e3e3;
		border-bottom: 2px solid #f0f0f0;
		color: #f5fffa;
		font: 9px/11px 'DejaVu Sans Condensed', 'Noto Sans CJK SC', sans-serif;
	}
	.pane {
		display: flex;
		margin-bottom: 1px;
	}
	.price {
		height: 585px;
	}
	.wave {
		height: 164px;
	}
	.tma {
		height: 150px;
		margin-bottom: 0;
	}
	.plot {
		flex: 1 1 0;
		min-width: 0;
		height: 100%;
		box-sizing: border-box;
		border: 1px solid #f5fffa;
		border-left: 0;
		shape-rendering: crispEdges;
	}
	.band {
		fill: none;
		stroke-width: 4;
	}
	.arrow,
	.dot {
		shape-rendering: geometricPrecision;
	}
	.plot text {
		fill: #f5fffa;
	}
	.plot .symbol {
		font-size: 10px;
	}
	.plot .sign {
		font-size: 15px;
		fill: #fff;
	}
	.plot .escape {
		fill: #ff0;
	}
	.r {
		fill: #f00;
	}
	.g {
		fill: #0f0;
	}
	.axis {
		position: relative;
		width: 50px;
		flex: none;
	}
	.price .axis {
		padding-top: 4px;
		height: 581px;
	}
	.axis li {
		display: flex;
		align-items: center;
		gap: 2px;
		height: 33px;
	}
	.axis li::before {
		content: '';
		width: 2px;
		height: 1px;
		background: #f5fffa;
	}
	.axis .current {
		position: absolute;
		top: 123px;
		left: 1px;
		width: 46px;
		height: 11px;
		color: #000;
		background: #f5fffa;
	}
	.ends {
		display: flex;
		flex-direction: column;
		justify-content: space-between;
		padding: 3px 0 1px 3px;
		box-sizing: border-box;
	}
	.level {
		position: absolute;
		left: 1px;
		font-weight: normal;
		color: #000;
		background: #f00;
		padding: 0 1px;
	}
	.high {
		top: 33px;
	}
	.low {
		top: 121px;
	}
	.zero {
		position: absolute;
		left: 2px;
		top: 60px;
	}
	.timeline {
		display: flex;
		height: 20px;
		overflow: hidden;
	}
	.timeline li {
		flex: none;
		width: 64px;
		padding-top: 4px;
		box-sizing: border-box;
		white-space: nowrap;
		background: linear-gradient(#f5fffa, #f5fffa) 1px 0 / 1px 3px no-repeat;
	}
	.timeline li:first-child {
		width: 62px;
		text-indent: -2px;
		background: none;
	}
	.drawings {
		position: absolute;
		inset: 0;
		width: 100%;
		height: 100%;
		pointer-events: none;
		shape-rendering: crispEdges;
	}

	.tabs {
		display: flex;
		height: 19px;
		border-top: 1px solid #000;
		border-bottom: 1px solid #fff;
		background: #f0f0f0;
	}
	.tab {
		height: 19px;
		padding: 2px 13px 0 12px;
		color: #777;
		background: linear-gradient(#777, #777) right 3px / 1px 14px no-repeat;
	}
	.tab.active {
		color: #000;
		background: #fff;
		padding: 2px 12px 0 12px;
		border: solid #000;
		border-width: 0 1px 1px 0;
	}
	.pager {
		display: flex;
		gap: 12px;
		margin-left: auto;
		padding-right: 9px;
		align-items: center;
	}

	.status {
		position: relative;
		display: flex;
		align-items: center;
		height: 22px;
		padding-top: 2px;
		box-sizing: border-box;
		background: #f0f0f0;
	}
	.help {
		flex: 1;
		text-indent: -4px;
		white-space: nowrap;
	}
	.cell {
		box-sizing: border-box;
		height: 18px;
		padding-left: 5px;
		border-left: 1px solid #a0a0a0;
	}
	.c1 {
		width: 135px;
	}
	.c2 {
		width: 117px;
	}
	.c3 {
		width: 80px;
	}
	.c4 {
		width: 224px;
	}
	.ime {
		position: absolute;
		right: 2px;
		bottom: 0;
		display: flex;
		align-items: center;
		gap: 8px;
		height: 24px;
		padding: 0 4px 0 38px;
		background: #fff;
		border: 1px solid #b7d0ee;
		border-radius: 3px;
		box-sizing: border-box;
	}
	.ime b {
		width: 16px;
		font-size: 15px;
		color: #0a6fe0;
	}
	.imelogo {
		position: absolute;
		left: 0;
		bottom: -2px;
	}

	.taskbar {
		display: flex;
		height: 40px;
		background: linear-gradient(90deg, #1a282d 0 50%, #1d2a28 58%, #2b281e 62%, #23281f 67%, #1c272b 75%, #25251f 83%, #2b251e 93%, #25211f);
	}
	.task {
		display: flex;
		align-items: center;
		justify-content: center;
		width: 37px;
	}
	.find {
		width: 56px;
		padding-left: 2px;
	}
	.running {
		width: 48px;
		background: #47535a;
		border-bottom: 2px solid #76b9ed;
	}
	.running text {
		font: bold 4px 'Liberation Sans', sans-serif;
		fill: #ddd;
	}
	.tray {
		display: flex;
		align-items: center;
		margin-left: auto;
		color: #fff;
		gap: 8px;
	}
	.lang {
		font-size: 14px;
		padding: 0 2px;
	}
	.logo {
		padding: 0 8px 0 2px;
	}
	.clock {
		display: flex;
		flex-direction: column;
		align-items: center;
		line-height: 19px;
		padding: 0 12px 0 4px;
		white-space: nowrap;
	}
	.peek {
		width: 4px;
		height: 40px;
		margin-left: 10px;
		border-left: 1px solid #666;
	}
</style>
